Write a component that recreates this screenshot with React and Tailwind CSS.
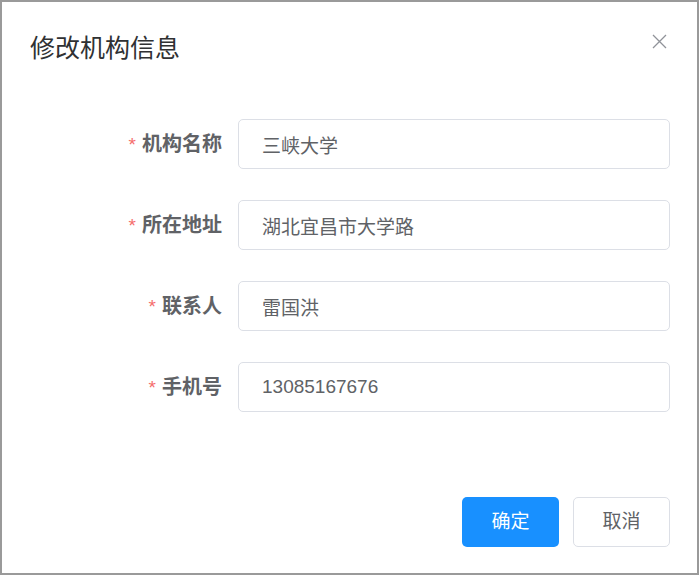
import React, { useState } from 'react';

const fields = [
  { key: 'name', label: '机构名称', value: '三峡大学' },
  { key: 'address', label: '所在地址', value: '湖北宜昌市大学路' },
  { key: 'contact', label: '联系人', value: '雷国洪' },
  { key: 'phone', label: '手机号', value: '13085167676' },
];

const App = () => {
  const [form, setForm] = useState(
    Object.fromEntries(fields.map((f) => [f.key, f.value]))
  );

  return (
    <div
      className="w-[699px] h-[575px] bg-white border-2 border-[#9a9a9a] flex flex-col text-[#606266]"
      style={{ fontFamily: '"Liberation Sans", "Noto Sans CJK SC", sans-serif' }}
    >
      {/* Header */}
      <div className="flex items-start justify-between pl-[28px] pr-[30px] pt-[30px]">
        <h2 className="text-[25px] leading-[32px] text-[#303133]">修改机构信息</h2>
        <button type="button" className="mt-[2px] text-[#909399]">
          <svg width="15" height="15" viewBox="0 0 15 15" fill="none">
            <path d="M1 1L14 14M14 1L1 14" stroke="currentColor" strokeWidth="1.3" />
          </svg>
        </button>
      </div>

      {/* Form */}
      <div className="flex flex-col gap-[31px] pt-[55px] pr-[27px]">
        {fields.map((f) => (
          <div key={f.key} className="flex items-center">
            <label className="shrink-0 w-[236px] pr-[16px] text-right text-[20px] font-bold text-[#606266]">
              <span className="text-[#f56c6c] font-normal text-[19px] mr-[6px]">*</span>
              {f.label}
            </label>
            <input
              type="text"
              value={form[f.key]}
              onChange={(e) => setForm({ ...form, [f.key]: e.target.value })}
              className="flex-1 min-w-0 h-[50px] border border-[#dcdfe6] rounded-[5px] px-[23px] text-[19px] text-[#606266] outline-none focus:border-[#409eff]"
            />
          </div>
        ))}
      </div>

      {/* Footer */}
      <div className="mt-auto flex justify-end gap-[14px] pr-[27px] pb-[26px]">
        <button
          type="button"
          className="w-[97px] h-[50px] rounded-[5px] bg-[#1890ff] text-white text-[19px]"
        >
          确定
        </button>
        <button
          type="button"
          className="w-[97px] h-[50px] rounded-[5px] border border-[#dcdfe6] bg-white text-[#606266] text-[19px]"
        >
          取消
        </button>
      </div>
    </div>
  );
};

export default App;
